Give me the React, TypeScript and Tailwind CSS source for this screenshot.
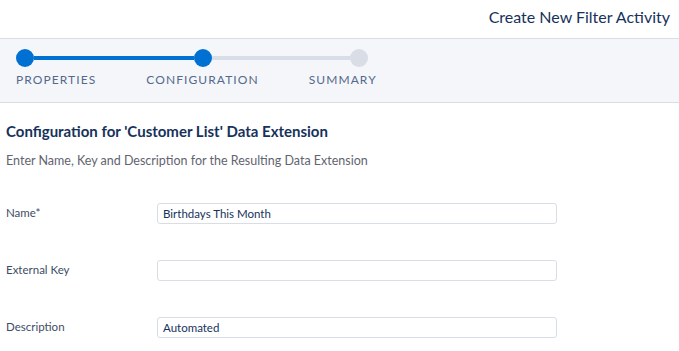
import * as React from "react";

const steps = [
  { label: "PROPERTIES", done: true },
  { label: "CONFIGURATION", done: true },
  { label: "SUMMARY", done: false },
];

const fields = [
  { label: "Name*", value: "Birthdays This Month" },
  { label: "External Key", value: "" },
  { label: "Description", value: "Automated" },
];

function Stepper() {
  return (
    <div className="pt-[10px] pl-[16px]">
      <div className="flex items-center">
        <div className="size-[18px] rounded-full bg-[#0070d2]" />
        <div className="h-[4px] w-[160px] bg-[#0070d2]" />
        <div className="size-[18px] rounded-full bg-[#0070d2]" />
        <div className="h-[4px] w-[138px] bg-[#d8dde6]" />
        <div className="size-[18px] rounded-full bg-[#d8dde6]" />
      </div>
      <div className="mt-[5px] flex gap-[50px] text-[12px] leading-[16px] tracking-[0.09em] text-[#54698d]">
        {steps.map((s) => (
          <div key={s.label}>{s.label}</div>
        ))}
      </div>
    </div>
  );
}

export default function App() {
  return (
    <div
      className="w-[679px] h-[351px] overflow-hidden bg-white"
      style={{ fontFamily: "Lato, 'Open Sans', sans-serif" }}
    >
      <div className="h-[39px] border-b border-[#d8dde6] flex justify-end items-start pr-[9px] pt-[6px]">
        <div className="text-[16px] leading-[22px] text-[#16325c]">
          Create New Filter Activity
        </div>
      </div>

      <div className="h-[64px] bg-[#f4f6f9] border-b border-[#d8dde6]">
        <Stepper />
      </div>

      <div className="px-[6px] pt-[18px]">
        <div className="text-[15px] leading-[20px] font-bold text-[#16325c]">
          Configuration for 'Customer List' Data Extension
        </div>
        <div className="mt-[12px] text-[12.5px] leading-[16px] text-[#5f6470]">
          Enter Name, Key and Description for the Resulting Data Extension
        </div>

        <div className="mt-[34px] flex flex-col gap-[36px]">
          {fields.map((f) => (
            <div key={f.label} className="flex items-center">
              <div className="w-[151px] text-[11.5px] text-[#3e4d66] -mt-[2px]">
                {f.label}
              </div>
              <div className="w-[400px] h-[21px] rounded-[3px] border border-[#d8dde6] bg-white px-[5px] flex items-center text-[11.5px] text-[#16325c]">
                {f.value}
              </div>
            </div>
          ))}
        </div>
      </div>
    </div>
  );
}
